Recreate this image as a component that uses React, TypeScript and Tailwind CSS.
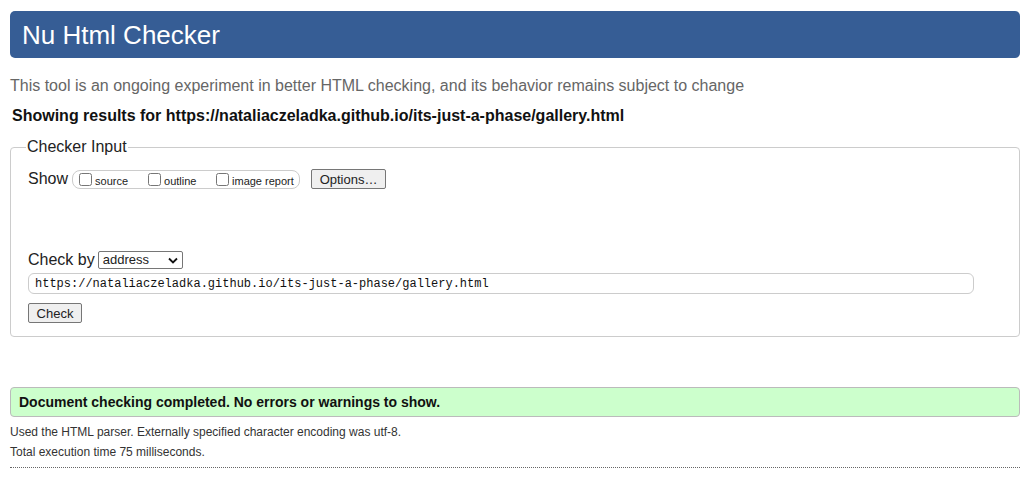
export default function App() {
  return (
    <div className="min-h-screen bg-white px-[10px] pt-[11px] font-['Liberation_Sans',Arial,sans-serif] text-[#222]">
      {/* Header */}
      <header className="flex h-[47px] items-center rounded-[5px] bg-[#365d95] pl-3">
        <h1 className="text-[26px] leading-none text-white">Nu Html Checker</h1>
      </header>

      <p className="mt-[19px] text-[16px] leading-[18px] text-[#666]">
        This tool is an ongoing experiment in better HTML checking, and its behavior remains subject to change
      </p>
      <p className="mt-[12px] pl-[2px] text-[16px] font-bold leading-[18px] text-[#111]">
        Showing results for https://nataliaczeladka.github.io/its-just-a-phase/gallery.html
      </p>

      {/* Checker input */}
      <fieldset className="mt-[13px] h-[199px] rounded-[4px] border border-[#ccc] px-[17px] pt-[9px]">
        <legend className="ml-[-2px] px-[1px] text-[16px] leading-[18px] text-[#222]">Checker Input</legend>

        <div className="mt-[4px] flex items-center">
          <span className="text-[16px] leading-[18px]">Show</span>
          <div className="ml-[4px] flex h-[19px] w-[228px] items-center rounded-[8px] border border-[#ccc] pl-[6px] text-[11px]">
            <label className="flex w-[69px] items-center">
              <input type="checkbox" className="mr-[3px] h-[13px] w-[13px]" />
              <span className="mt-[4px]">source</span>
            </label>
            <label className="flex w-[68px] items-center">
              <input type="checkbox" className="mr-[3px] h-[13px] w-[13px]" />
              <span className="mt-[4px]">outline</span>
            </label>
            <label className="flex items-center">
              <input type="checkbox" className="mr-[3px] h-[13px] w-[13px]" />
              <span className="mt-[4px]">image report</span>
            </label>
          </div>
          <button className="ml-[11px] h-[20px] w-[75px] rounded-[2px] border border-[#767676] bg-[#efefef] text-[13px] leading-none">
            Options…
          </button>
        </div>

        <div className="mt-[62px] flex items-center">
          <span className="text-[16px] leading-[18px]">Check by</span>
          <div className="ml-[3px] flex h-[18px] w-[85px] items-center justify-between rounded-[2px] border border-[#767676] bg-white pl-[4px] pr-[4px] text-[13px]">
            <span>address</span>
            <svg width="10" height="7" viewBox="0 0 10 7" fill="none">
              <path d="M1 1.5 5 5.5 9 1.5" stroke="#111" strokeWidth="1.8" />
            </svg>
          </div>
        </div>

        <div className="mt-[4px] flex h-[21px] w-[946px] items-center rounded-[6px] border border-[#ccc] pl-[6px] font-['Liberation_Mono',monospace] text-[12px] text-[#111]">
          https://nataliaczeladka.github.io/its-just-a-phase/gallery.html
        </div>

        <button className="mt-[9px] h-[20px] w-[54px] rounded-[2px] border border-[#767676] bg-[#efefef] text-[13px] leading-none">
          Check
        </button>
      </fieldset>

      {/* Result */}
      <div className="mt-[50px] flex h-[30px] items-center rounded-[4px] border border-[#bbb] bg-[#ccffcc] pl-[8px] text-[14px] font-bold text-[#111]">
        Document checking completed. No errors or warnings to show.
      </div>
      <p className="mt-[8px] text-[12px] leading-[14px] text-[#333]">
        Used the HTML parser. Externally specified character encoding was utf-8.
      </p>
      <p className="mt-[6px] text-[12px] leading-[14px] text-[#333]">Total execution time 75 milliseconds.</p>
      <div className="mt-[8px] border-t border-dotted border-[#666]" />
    </div>
  )
}
